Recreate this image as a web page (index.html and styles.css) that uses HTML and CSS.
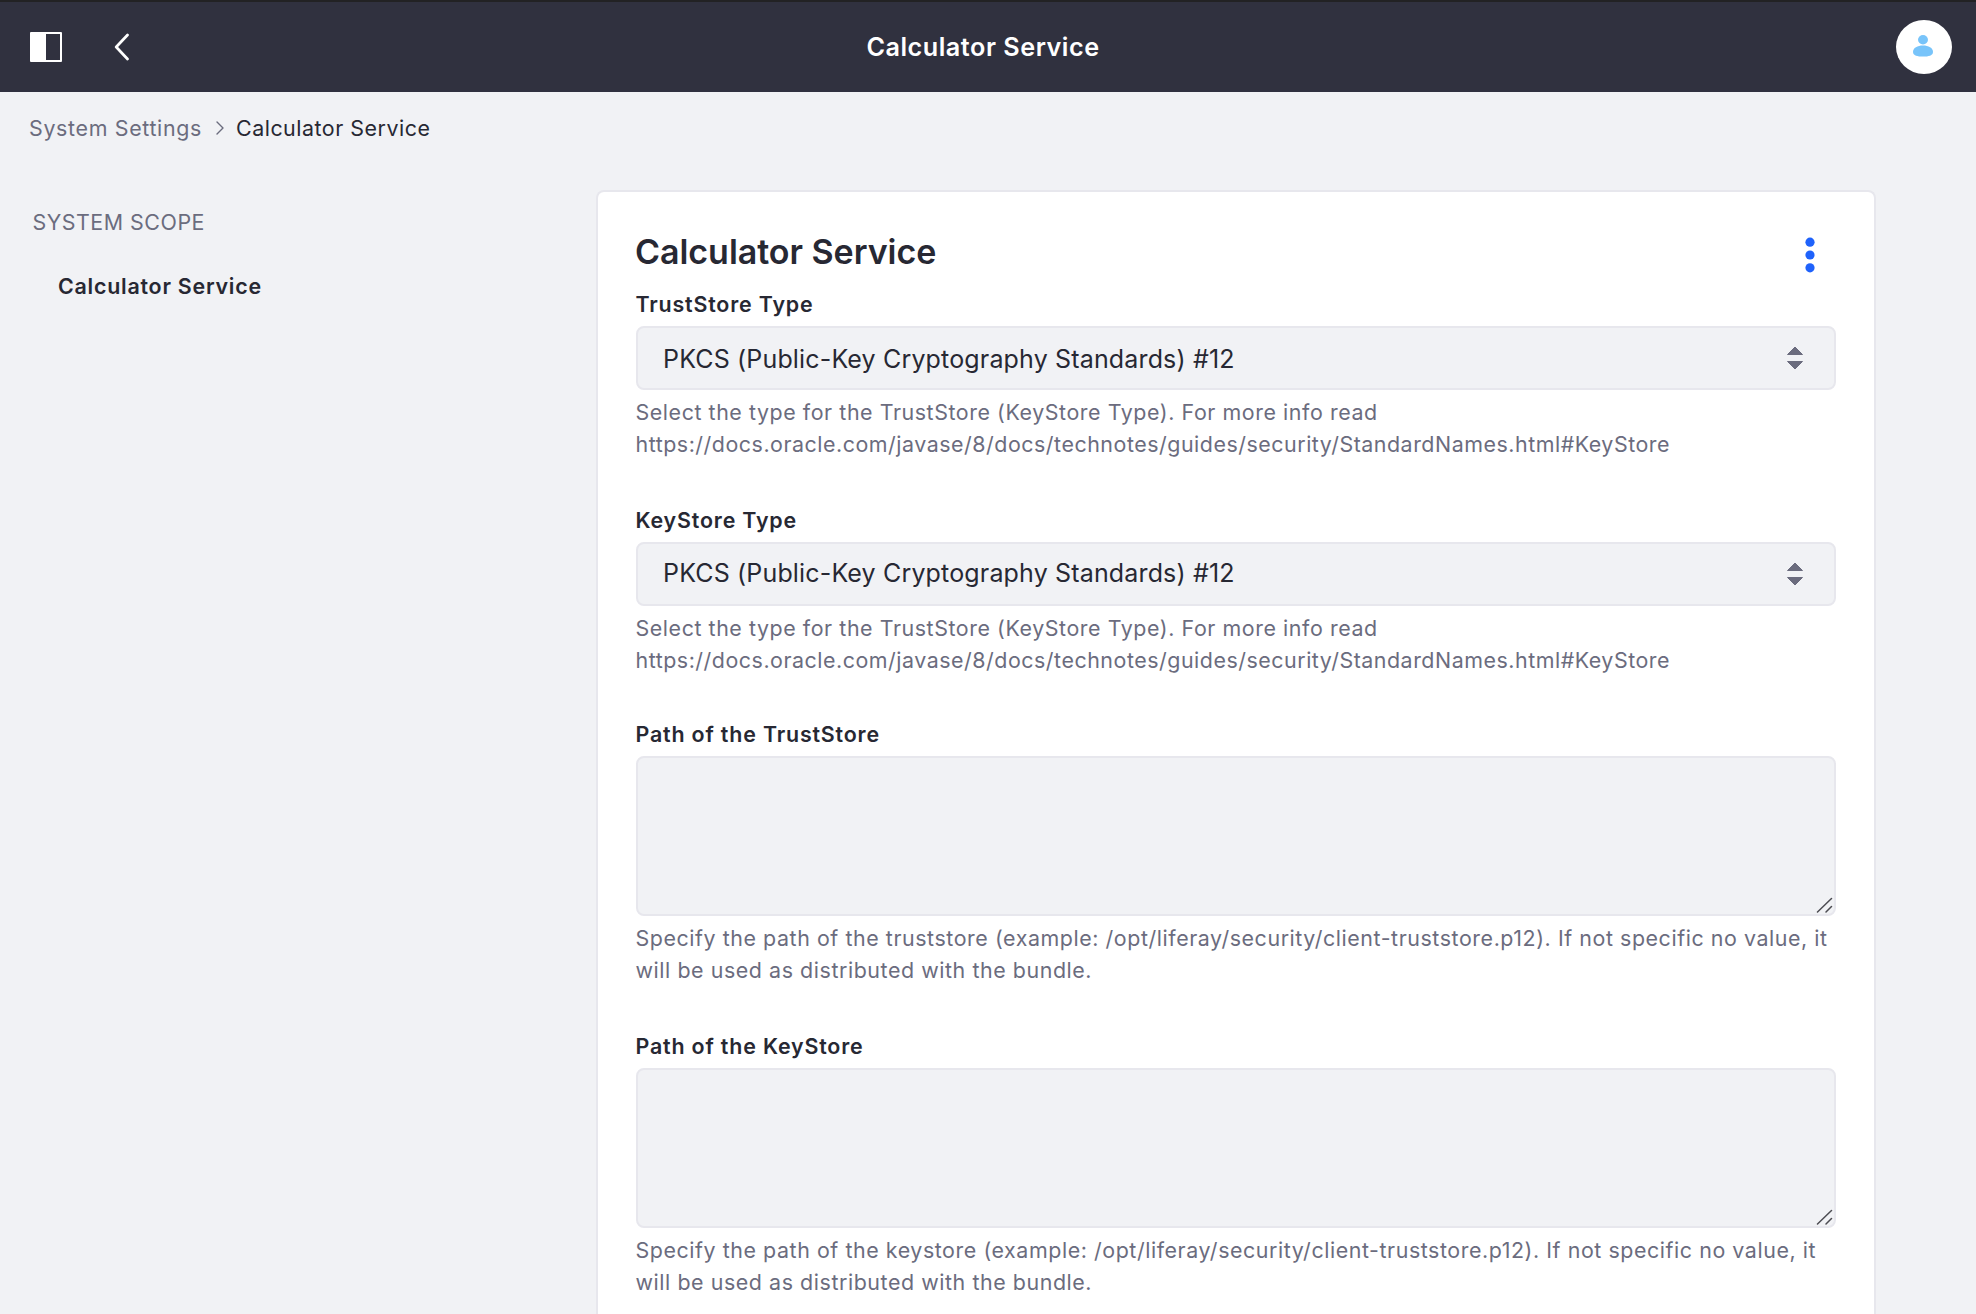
FILE: index.html
```html
<!DOCTYPE html>
<html lang="en">
<head>
<meta charset="utf-8">
<title>Calculator Service</title>
<link rel="stylesheet" href="styles.css">
</head>
<body>
<header class="control-menu">
  <div class="control-menu__start">
    <svg width="32" height="30" viewBox="0 0 32 30"><rect width="32" height="30" rx="1" fill="#fff"/><rect x="16" y="2" width="14" height="26" fill="#30313f"/></svg>
    <svg width="15" height="28" viewBox="0 0 15 28"><path d="M13.500 2 2.200 14l11.300 12" fill="none" stroke="#fff" stroke-width="2.7" stroke-linecap="round" stroke-linejoin="round"/></svg>
  </div>
  <h1 class="control-menu__title">Calculator Service</h1>
  <div class="control-menu__end">
    <span class="avatar"><svg width="20" height="22" viewBox="0 0 20 22"><ellipse cx="10" cy="4.8" rx="5" ry="4.7" fill="#78c4fa"/><path d="M0 17C0 12.800 4.500 10.600 10 10.600s10 2.200 10 6.400c0 3.600-4.500 4.600-10 4.600S0 20.600 0 17z" fill="#78c4fa"/></svg></span>
  </div>
</header>
<nav class="breadcrumb">
  <span class="breadcrumb__link">System Settings</span>
  <svg class="breadcrumb__sep" width="8" height="14" viewBox="0 0 8 14"><path d="M1 1l6 6-6 6" fill="none" stroke="#6b6c7e" stroke-width="1.400" stroke-linecap="round" stroke-linejoin="round"/></svg>
  <span class="breadcrumb__current">Calculator Service</span>
</nav>
<div class="layout">
  <aside class="sidebar">
    <div class="sidebar__heading">System Scope</div>
    <div class="sidebar__item">Calculator Service</div>
  </aside>
  <main class="sheet">
    <div class="sheet__header">
      <h2 class="sheet__title">Calculator Service</h2>
      <svg class="icon-more" width="10" height="36" viewBox="0 0 10 36"><g fill="#1f62fb"><circle cx="5" cy="5.200" r="4.600"/><circle cx="5" cy="18" r="4.600"/><circle cx="5" cy="30.800" r="4.600"/></g></svg>
    </div>
    <div class="field">
      <label class="field__label">TrustStore Type</label>
      <div class="select"><span class="select__value select__value--low">PKCS (Public-Key Cryptography Standards) #12</span>
        <svg width="18" height="24" viewBox="0 0 18 24"><path d="M9 1l7.500 7.500H1.500zM1.500 15.500h15L9 23z" fill="#6b6c7e" stroke="#6b6c7e" stroke-linejoin="round"/></svg></div>
      <p class="field__help">Select the type for the TrustStore (KeyStore Type). For more info read<br><span class="field__url">https://docs.oracle.com/javase/8/docs/technotes/guides/security/StandardNames.html#KeyStore</span></p>
    </div>
    <div class="field field--tight">
      <label class="field__label">KeyStore Type</label>
      <div class="select"><span class="select__value">PKCS (Public-Key Cryptography Standards) #12</span>
        <svg width="18" height="24" viewBox="0 0 18 24"><path d="M9 1l7.500 7.500H1.500zM1.500 15.500h15L9 23z" fill="#6b6c7e" stroke="#6b6c7e" stroke-linejoin="round"/></svg></div>
      <p class="field__help">Select the type for the TrustStore (KeyStore Type). For more info read<br><span class="field__url">https://docs.oracle.com/javase/8/docs/technotes/guides/security/StandardNames.html#KeyStore</span></p>
    </div>
    <div class="field">
      <label class="field__label">Path of the TrustStore</label>
      <div class="textarea"><svg width="17" height="16" viewBox="0 0 17 16"><path d="M1.500 15l14-13.500M10 15l5.500-5.500" fill="none" stroke="#4c4c52" stroke-width="1.500" stroke-linecap="round"/></svg></div>
      <p class="field__help">Specify the path of the truststore (example: /opt/liferay/security/client-truststore.p12). If not specific no value, it<br>will be used as distributed with the bundle.</p>
    </div>
    <div class="field">
      <label class="field__label">Path of the KeyStore</label>
      <div class="textarea"><svg width="17" height="16" viewBox="0 0 17 16"><path d="M1.500 15l14-13.500M10 15l5.500-5.500" fill="none" stroke="#4c4c52" stroke-width="1.500" stroke-linecap="round"/></svg></div>
      <p class="field__help">Specify the path of the keystore (example: /opt/liferay/security/client-truststore.p12). If not specific no value, it<br>will be used as distributed with the bundle.</p>
    </div>
  </main>
</div>
</body>
</html>
```
FILE: styles.css
```css
* { box-sizing: border-box; }
body {
  margin: 0;
  background: #f1f2f5;
  color: #272833;
  font: 21.4px/32px Inter, "Liberation Sans", sans-serif;
  letter-spacing: 0.57px;
}
h1, h2, p { margin: 0; }
svg { display: block; flex: none; }

.control-menu {
  height: 92px;
  padding: 0 24px 0 30px;
  border-top: 2px solid #222224;
  background: #30313f;
  color: #fff;
  display: grid;
  grid-template-columns: 1fr auto 1fr;
  align-items: center;
}
.control-menu__start { display: flex; align-items: center; gap: 52px; }
.control-menu__title {
  margin-right: 16px;
  font-size: 25.2px;
  font-weight: 600;
  letter-spacing: 0.53px;
}
.control-menu__end { display: flex; justify-content: flex-end; }
.avatar {
  width: 56px;
  height: 54px;
  border-radius: 50%;
  background: #fff;
  display: flex;
  align-items: center;
  justify-content: center;
}
.avatar svg { margin: 0 2px 2px 0; }

.breadcrumb { display: flex; align-items: center; padding: 20px 30px 0 29px; }
.breadcrumb__link { color: #6b6c7e; letter-spacing: 0.67px; }
.breadcrumb__current { letter-spacing: 0.52px; }
.breadcrumb__sep { margin: 0 12px 0 14px; }

.layout { display: grid; grid-template-columns: 596px 1280px; padding-top: 46px; }
.sidebar { padding: 16px 0 0 32.5px; }
.sidebar__heading { color: #6b6c7e; text-transform: uppercase; letter-spacing: 0.52px; }
.sidebar__item { margin: 32px 0 0 25.5px; font-weight: 600; letter-spacing: 0.77px; }

.sheet {
  height: 1124px;
  padding: 36px 38px 0;
  background: #fff;
  border: 2px solid #e7e7ed;
  border-bottom: 0;
  border-radius: 8px 8px 0 0;
}
.sheet__header {
  display: flex;
  justify-content: space-between;
  height: 44px;
  margin-bottom: 16px;
  padding-right: 21px;
}
.sheet__title {
  margin: 2px 0 0 -1px;
  font-size: 34px;
  line-height: 44px;
  font-weight: 600;
  letter-spacing: -0.04px;
}
.icon-more { margin-top: 9px; }

.field { margin-bottom: 44px; }
.field:last-child { margin-bottom: 0; }
.field--tight { margin-bottom: 42px; }
.field__label { display: block; margin: 0 0 6px -0.5px; font-weight: 600; letter-spacing: 0.83px; }
.field__help { margin: 6px 0 0 -0.5px; color: #6b6c7e; white-space: nowrap; }
.field__url { letter-spacing: 0.53px; }

.select, .textarea {
  display: flex;
  justify-content: space-between;
  background: #f1f2f5;
  border: 2px solid #e7e7ed;
  border-radius: 8px;
}
.select { height: 64px; align-items: center; padding: 0 30px 0 25px; }
.select__value { padding-bottom: 3px; font-size: 25px; letter-spacing: 0.16px; }
.select__value--low { padding: 2px 0 0; }
.textarea { height: 160px; justify-content: flex-end; align-items: flex-end; padding: 0 1px 1px 0; }
```
